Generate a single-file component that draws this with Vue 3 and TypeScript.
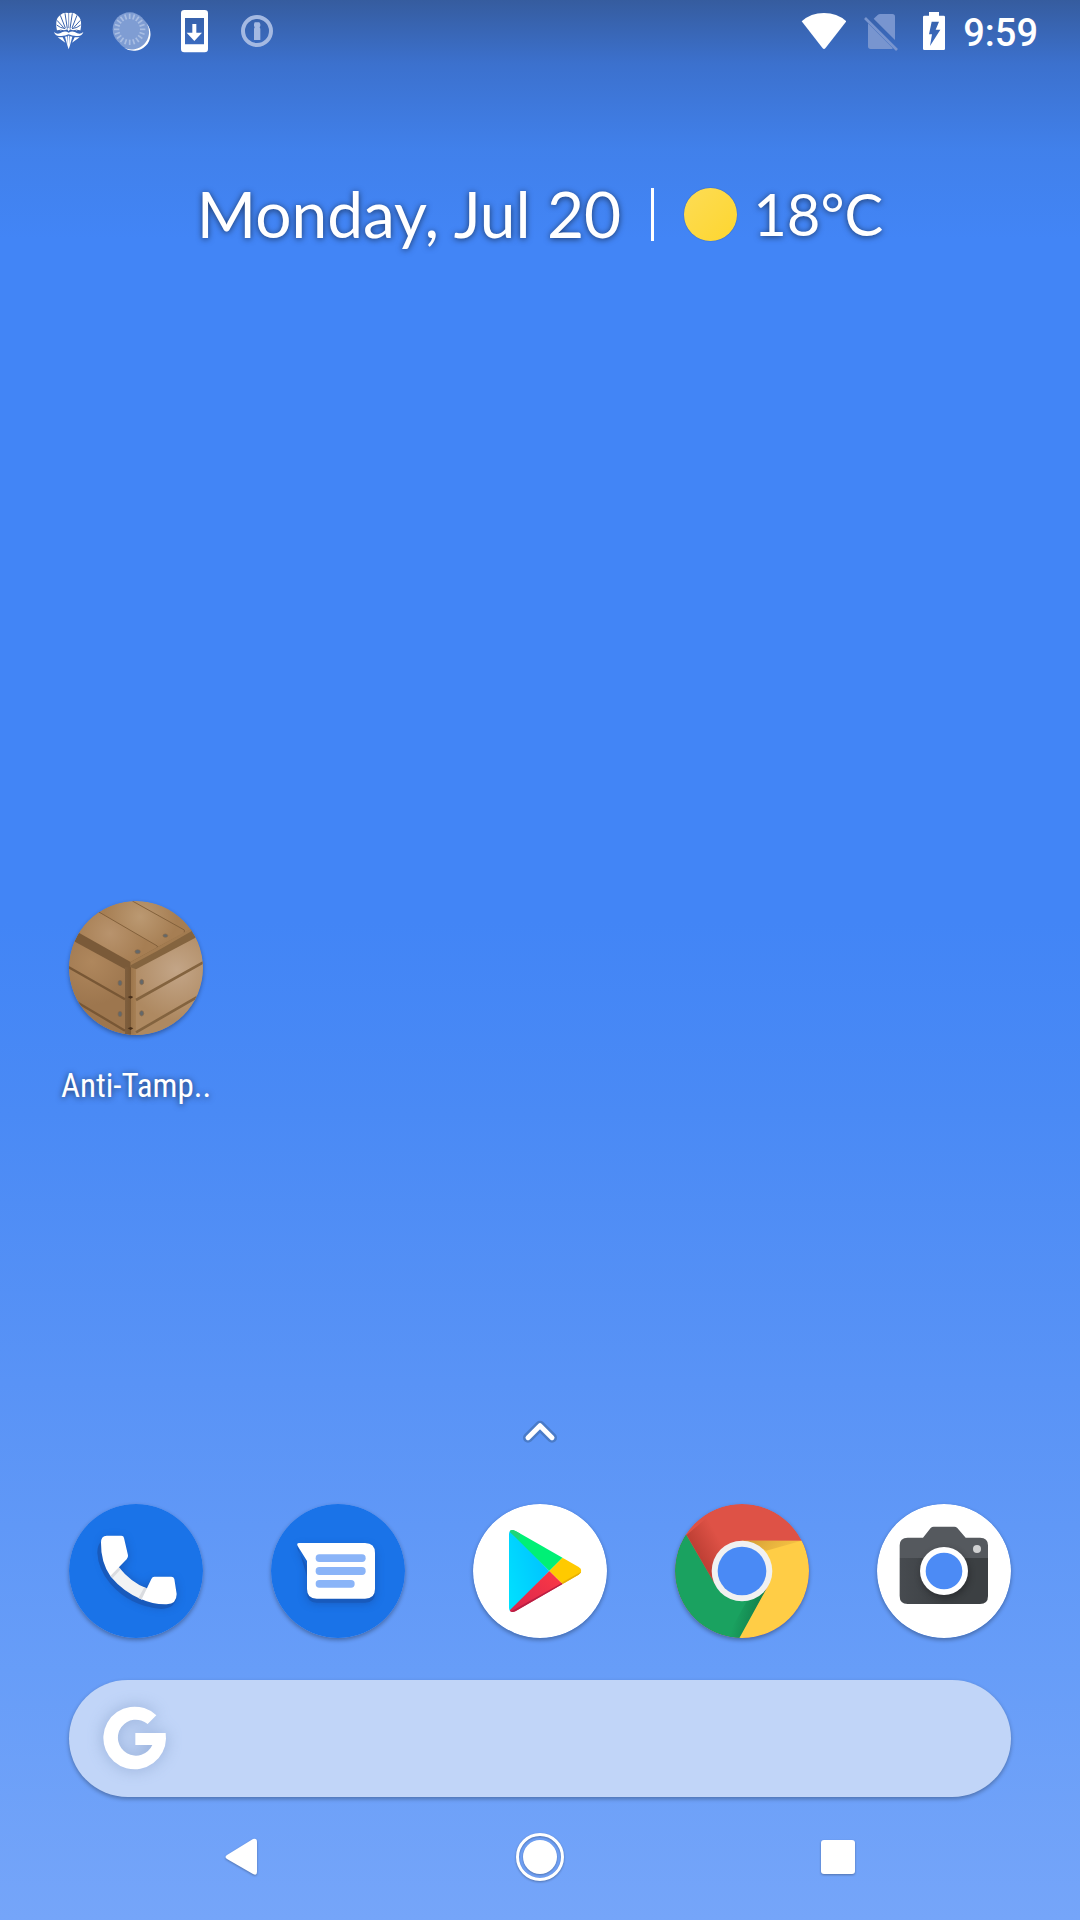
<script setup lang="ts">
const dateText = 'Monday, Jul 20'
const temperature = '18°C'
const clock = '9:59'

const ringTicks: number[] = Array.from({ length: 20 }, (_, i) => i * 18)
</script>

<template>
  <div class="home">
    <header class="status">
      <div class="status-group">
        <svg class="status-icon" viewBox="15 21 144 144" role="img" aria-label="Root manager">
          <path
            fill="#fff"
            d="M85 39Q69 37 61 45Q50 53 49 66Q47 80 51 92L68 93L82 88L86 94L90 88L104 93L121 92Q125 80 123 66Q122 53 111 45Q103 37 87 39Z"
          />
          <g fill="none" stroke="#3962ad" stroke-width="3">
            <path d="M82 86L75 40M90 86L97 40M76 84L61 46M96 84L111 46M71 83L51 61M101 83L121 61" />
            <path d="M50 75Q60 84 76 86M122 75Q112 84 96 86M50 93Q62 88 75 93M122 93Q110 88 97 93" />
            <path d="M86 36V84" stroke-width="2" />
          </g>
          <path
            fill="#fff"
            d="M42 96Q50 104 60 100Q74 90 86 98Q98 90 112 100Q122 104 130 96Q126 109 112 108Q98 109 86 103Q74 109 60 108Q46 109 42 96ZM53 112L68 112L76 128ZM119 112L104 112L96 128ZM75 110L82 109L82 136ZM97 110L90 109L90 136ZM84 107H88L90 136L86 148L82 136Z"
          />
        </svg>
        <svg class="status-icon" viewBox="204 21 144 144" role="img" aria-label="Syncing">
          <circle cx="279" cy="99" r="51" fill="#7f9dd3" />
          <path d="M321 72A52 52 0 0 1 252 143A50 50 0 0 0 321 72Z" fill="#fff" />
          <circle cx="269" cy="88" r="51" fill="#7f9dd3" />
          <g stroke="#a9bee3" stroke-width="5">
            <line v-for="a in ringTicks" :key="a" x1="269" y1="41" x2="269" y2="57" :transform="`rotate(${a} 269 88)`" />
          </g>
        </svg>
        <svg class="status-icon" viewBox="393 21 144 144" role="img" aria-label="System update">
          <path
            fill="#fff"
            fill-rule="evenodd"
            d="M433 30H494Q504 30 504 40V147Q504 157 494 157H433Q423 157 423 147V40Q423 30 433 30ZM435 54V133H492V54Z"
          />
          <path fill="#fff" d="M457 72H469V98H486L463 123L440 98H457Z" />
        </svg>
        <svg class="status-icon" viewBox="582 21 144 144" role="img" aria-label="Password manager">
          <circle cx="651" cy="93" r="42" fill="none" stroke="#a4b9e2" stroke-width="12" />
          <path fill="#a4b9e2" d="M644 67H658L661 72V78L659 82L661 86V120H642V86L644 82L642 78V72Z" />
        </svg>
      </div>
      <div class="status-group right">
        <svg class="status-icon" viewBox="54 21 144 144" role="img" aria-label="Wi-Fi">
          <path fill="#fff" d="M65 64Q92 39 132 39Q172 39 199 64L136 145Q132 149 128 145Z" />
        </svg>
        <svg class="status-icon" viewBox="222 21 144 144" role="img" aria-label="No SIM">
          <path
            fill="#7895cf"
            d="M281 56L293 45Q296 42 301 42H337Q345 42 345 50V120ZM264 70L338 144L337 147H272Q264 147 264 139Z"
          />
          <path d="M255 54L351 150" stroke="#7895cf" stroke-width="8" />
        </svg>
        <svg class="status-icon" viewBox="390 21 144 144" role="img" aria-label="Battery charging">
          <path
            fill="#fff"
            fill-rule="evenodd"
            d="M447 36H477V47H491Q495 47 495 51V146Q495 150 491 150H433Q429 150 429 146V51Q429 47 433 47H447ZM455 65L447 103H456L450 138L481 89H467L477 65Z"
          />
        </svg>
        <time class="clock">{{ clock }}</time>
      </div>
    </header>

    <main class="workspace">
      <section class="glance">
        <a class="glance-text" href="#">{{ dateText }}</a>
        <span class="divider"></span>
        <a class="weather" href="#">
          <span class="sun"></span>
          <span class="glance-text temperature">{{ temperature }}</span>
        </a>
      </section>

      <section class="apps">
        <a class="app" href="#">
          <svg class="icon" viewBox="57 63 402 402" aria-hidden="true">
            <defs>
              <radialGradient id="woodLeft" gradientUnits="userSpaceOnUse" cx="125" cy="245" r="130">
                <stop offset="0" stop-color="#af875d" />
                <stop offset="1" stop-color="#9d764e" />
              </radialGradient>
              <radialGradient id="woodRight" gradientUnits="userSpaceOnUse" cx="380" cy="270" r="150">
                <stop offset="0" stop-color="#c3a587" />
                <stop offset="1" stop-color="#ae8961" />
              </radialGradient>
              <radialGradient id="woodTop" gradientUnits="userSpaceOnUse" cx="180" cy="160" r="110">
                <stop offset="0" stop-color="#b8936d" />
                <stop offset="1" stop-color="#a67e53" />
              </radialGradient>
              <radialGradient id="woodBack" gradientUnits="userSpaceOnUse" cx="270" cy="110" r="110">
                <stop offset="0" stop-color="#bb9972" />
                <stop offset="1" stop-color="#a67e53" />
              </radialGradient>
              <linearGradient id="post" x1="0" x2="1">
                <stop offset="0" stop-color="#7f5f3e" />
                <stop offset="0.5" stop-color="#795836" />
                <stop offset="0.56" stop-color="#9c764c" />
                <stop offset="1" stop-color="#a78055" />
              </linearGradient>
              <clipPath id="disc"><circle cx="258" cy="264" r="201" /></clipPath>
            </defs>
            <g clip-path="url(#disc)">
              <rect x="57" y="63" width="402" height="402" fill="url(#woodBack)" />
              <path d="M50 40L145 95L322 198V215L242 250L50 150Z" fill="url(#woodTop)" />
              <path d="M145 95L322 198V215M247 63L403 150V168" fill="none" stroke="#83613c" stroke-width="3" />
              <path d="M50 165L242 265V470H50Z" fill="url(#woodLeft)" />
              <path d="M242 265L465 150V470H242Z" fill="url(#woodRight)" />
              <path d="M50 138L242 246V272L226 268L50 172Z" fill="#7a5a39" />
              <path d="M242 246L322 202L465 126V158L258 268L242 275Z" fill="#84643f" />
              <path d="M242 246L322 202L403 157L440 138L440 145L320 214L242 256Z" fill="#a27b50" />
              <path d="M225 262L242 262L258 268V470H225Z" fill="url(#post)" />
              <path d="M50 258L225 358M80 366L225 452" stroke="#785735" stroke-width="7" />
              <path d="M258 360L465 244M258 457L450 346" stroke="#83633f" stroke-width="8" />
              <g fill="#64686a" stroke="#866a4b" stroke-width="2">
                <ellipse cx="263" cy="215" rx="8" ry="6" />
                <ellipse cx="346" cy="167" rx="7" ry="5" />
                <ellipse cx="210" cy="309" rx="6" ry="8" />
                <ellipse cx="210" cy="402" rx="6" ry="8" />
                <ellipse cx="275" cy="306" rx="6" ry="8" />
                <ellipse cx="275" cy="400" rx="6" ry="8" />
              </g>
              <path d="M233 351L242 347L250 351L242 356ZM233 445L242 441L250 445L242 450Z" fill="#49301b" />
            </g>
          </svg>
          <span class="app-label">Anti-Tamp..</span>
        </a>
      </section>

      <button class="drawer" type="button" aria-label="All apps">
        <svg class="chevron" viewBox="186 54 108 78" aria-hidden="true">
          <path d="M204 113L240 77L276 113" class="chevron-edge" />
          <path d="M204 113L240 77L276 113" class="chevron-line" />
        </svg>
      </button>

      <nav class="dock" aria-label="Favourites">
        <a class="app" href="#" aria-label="Phone">
          <svg class="icon" viewBox="57 42 402 402" aria-hidden="true">
            <circle cx="258" cy="243" r="201" fill="#1a73e8" />
            <path
              class="soft"
              d="M166 146H221L234 205L212 238Q242 278 290 294L308 270H372L380 322Q372 350 335 350Q265 348 207 294Q160 245 156 170Z"
            />
            <path
              fill="#185abc"
              d="M153 155Q142 165 142 188Q144 235 180 280Q240 350 335 357Q378 354 380 318L330 342L180 258Z"
            />
            <path fill="#f1f3f4" d="M208 233Q242 276 290 295L276 329Q222 308 181 259Z" />
            <path fill="#dadce0" d="M204 229L212 238L188 264L180 256ZM283 292L292 296L276 329L265 324Z" />
            <path fill="#fff" d="M170 137H214Q221 137 222 144L234 196Q235 203 230 208L181 258Q152 215 153 158Q153 137 170 137Z" />
            <path fill="#fff" d="M313 260H364Q371 260 373 267L380 312Q380 342 350 343Q308 344 275 328L304 267Q307 260 313 260Z" />
          </svg>
        </a>
        <a class="app" href="#" aria-label="Messages">
          <svg class="icon" viewBox="63 42 402 402" aria-hidden="true">
            <circle cx="264" cy="243" r="201" fill="#1a73e8" />
            <path class="soft" d="M146 172H345Q374 172 374 202V308Q374 338 345 338H200Q171 338 171 308V225Z" />
            <path fill="#185abc" d="M142 162V176L171 228V309Q171 338 200 338H345Q375 338 375 309V290H180Z" />
            <path fill="#fff" d="M147 159H345Q375 159 375 189V297Q375 326 345 326H200Q171 326 171 297V213L143 168Q139 159 147 159Z" />
            <g fill="#8ab4f8">
              <rect x="197" y="193" width="150" height="23" rx="11" />
              <rect x="197" y="231" width="150" height="24" rx="11" />
              <rect x="197" y="270" width="117" height="23" rx="11" />
            </g>
          </svg>
        </a>
        <a class="app" href="#" aria-label="Play Store">
          <svg class="icon" viewBox="39 312 402 402" aria-hidden="true">
            <defs>
              <linearGradient id="playBlue" x1="1" y1="0.2" x2="0" y2="0.8">
                <stop offset="0" stop-color="#00bfff" />
                <stop offset="1" stop-color="#00e1ff" />
              </linearGradient>
              <linearGradient id="playRed" x1="1" y1="0" x2="0" y2="1">
                <stop offset="0" stop-color="#ff3a44" />
                <stop offset="1" stop-color="#d5244f" />
              </linearGradient>
              <clipPath id="playShape">
                <path d="M147 402Q148 386 166 392L356 501Q372 512 356 524L166 634Q148 640 147 624Z" />
              </clipPath>
            </defs>
            <circle cx="240" cy="513" r="201" fill="#fff" />
            <g clip-path="url(#playShape)">
              <path d="M140 380L268 513L140 646Z" fill="url(#playBlue)" />
              <path d="M147 383L320 461L268 513L150 396Z" fill="#00f076" />
              <path d="M147 383L180 400L178 421L150 396Z" fill="#20d47a" />
              <path d="M307 474L380 480V540L307 551L268 513Z" fill="#ffca00" />
              <path d="M150 630L268 513L320 564L147 650Z" fill="url(#playRed)" />
              <path d="M150 636L307 548V556L160 640Z" fill="#b81f43" />
              <path d="M307 547L366 514V520L307 556Z" fill="#e6ae05" />
            </g>
          </svg>
        </a>
        <a class="app" href="#" aria-label="Chrome">
          <svg class="icon" viewBox="45 42 402 402" aria-hidden="true">
            <defs>
              <linearGradient id="redShade" gradientUnits="userSpaceOnUse" x1="115" y1="200" x2="185" y2="160">
                <stop offset="0" stop-color="#a83228" stop-opacity="0.6" />
                <stop offset="1" stop-color="#a83228" stop-opacity="0" />
              </linearGradient>
              <linearGradient id="yellowShade" x1="0" y1="0" x2="1" y2="0.2">
                <stop offset="0" stop-color="#c99232" stop-opacity="0.9" />
                <stop offset="1" stop-color="#e0aa3c" stop-opacity="0.3" />
              </linearGradient>
              <linearGradient id="greenShade" x1="1" y1="0.4" x2="0.3" y2="0.2">
                <stop offset="0" stop-color="#0f7344" stop-opacity="0.9" />
                <stop offset="1" stop-color="#0f7344" stop-opacity="0" />
              </linearGradient>
              <clipPath id="chromeDisc"><circle cx="246" cy="243" r="201" /></clipPath>
            </defs>
            <g clip-path="url(#chromeDisc)">
              <rect x="45" y="42" width="402" height="402" fill="#de5246" />
              <path d="M80 135L158 270L190 170L220 140L150 75Z" fill="url(#redShade)" />
              <path d="M30 60L79 135L168 288L246 333L318 300L237 450H30Z" fill="#1aa260" />
              <path d="M318 300L237 445L200 440L262 331Z" fill="url(#greenShade)" />
              <path d="M246 152H460V450H235L323 290Z" fill="#ffcd46" />
              <path d="M246 152H425L319 182Z" fill="url(#yellowShade)" />
            </g>
            <circle cx="246" cy="243" r="91" fill="#f1f1f1" />
            <circle cx="246" cy="243" r="73" fill="#4a8af5" />
          </svg>
        </a>
        <a class="app" href="#" aria-label="Camera">
          <svg class="icon" viewBox="51 42 402 402" aria-hidden="true">
            <defs>
              <linearGradient id="cameraBody" x1="0" x2="1">
                <stop offset="0" stop-color="#474b50" />
                <stop offset="0.5" stop-color="#3c4043" />
                <stop offset="1" stop-color="#3c4043" />
              </linearGradient>
            </defs>
            <circle cx="252" cy="243" r="201" fill="#fff" />
            <path d="M119 204H384V318Q384 342 360 342H143Q119 342 119 318Z" fill="url(#cameraBody)" />
            <path
              d="M119 204V166Q119 143 143 143H189L212 114Q216 110 221 110H283Q288 110 292 114L317 143H360Q384 143 384 166V204Z"
              fill="#55595e"
            />
            <circle class="lens-shadow" cx="256" cy="252" r="72" />
            <circle cx="252" cy="243" r="72" fill="#fff" />
            <circle cx="252" cy="243" r="55" fill="#4c8bf5" />
            <circle cx="351" cy="177" r="12" fill="#d0d1d2" />
          </svg>
        </a>
      </nav>

      <button class="search" type="button" aria-label="Google search">
        <svg class="google" viewBox="135 105 240 252" aria-hidden="true">
          <path
            fill="#fff"
            d="M319 163A94 94 0 1 0 348 233L347 216H256V252H307A54 54 0 1 1 293 189Z"
          />
        </svg>
      </button>
    </main>

    <nav class="system-nav" aria-label="System">
      <button type="button" aria-label="Back">
        <svg viewBox="0 0 48 48"><path d="M9 22L35 6Q39 5 39 9V39Q39 43 35 41L9 26Q6 24 9 22Z" /></svg>
      </button>
      <button type="button" aria-label="Home">
        <svg viewBox="0 0 48 48">
          <circle cx="24" cy="24" r="17" />
          <circle cx="24" cy="24" r="22.5" class="home-ring" />
        </svg>
      </button>
      <button type="button" aria-label="Recents">
        <svg viewBox="0 0 48 48"><rect x="7" y="7" width="34" height="34" rx="3" /></svg>
      </button>
    </nav>
  </div>
</template>

<style>
body {
  margin: 0;
}
</style>

<style scoped>
.home {
  display: flex;
  flex-direction: column;
  min-height: 100vh;
  color: #fff;
  font-family: Roboto, sans-serif;
  background:
    linear-gradient(rgba(44, 60, 90, 0.56) 0, rgba(50, 80, 140, 0.38) 64px, rgba(60, 110, 190, 0.2) 150px, rgba(66, 133, 246, 0) 240px),
    linear-gradient(#4285f6 0%, #4285f6 48%, #4a8af5 58%, #5993f6 72%, #679df8 87%, #75a5f9 100%);
}

a {
  color: inherit;
  text-decoration: none;
}

button {
  padding: 0;
  border: 0;
  background: none;
  cursor: pointer;
}

svg {
  display: block;
}

.status {
  display: flex;
  justify-content: space-between;
  height: 62px;
  padding: 0 42px 0 45px;
}

.status-group {
  display: flex;
  align-items: center;
  gap: 15px;
}

.status-group.right {
  gap: 8px;
}

.status-icon {
  width: 48px;
  height: 48px;
}

.clock {
  margin-left: -3px;
  padding-top: 4px;
  font-size: 38px;
  font-weight: 500;
  line-height: 48px;
}

.workspace {
  display: flex;
  flex: 1;
  flex-direction: column;
}

.glance {
  display: flex;
  align-items: center;
  justify-content: center;
  margin-top: 112px;
}

.glance-text {
  font-family: Lato, sans-serif;
  font-size: 64px;
  line-height: 80px;
  white-space: nowrap;
  text-shadow: 0 1px 6px rgba(0, 0, 0, 0.6);
}

.temperature {
  font-size: 58px;
}

.divider {
  width: 3px;
  height: 53px;
  margin: 0 30px;
  background: #fff;
}

.weather {
  display: flex;
  align-items: center;
  gap: 16px;
}

.sun {
  width: 53px;
  height: 53px;
  border-radius: 50%;
  background: linear-gradient(135deg, #fddc55, #fdd62f);
  box-shadow: 0 0 1px rgba(0, 0, 0, 0.5);
}

.apps,
.dock {
  display: grid;
  grid-template-columns: repeat(5, 1fr);
  padding: 0 35px;
}

.apps {
  margin-top: 647px;
}

.app {
  display: flex;
  flex-direction: column;
  align-items: center;
}

.icon {
  width: 134px;
  height: 134px;
  border-radius: 50%;
  box-shadow: 0 2px 4px rgba(0, 0, 0, 0.32);
}

.soft {
  fill: #17408b;
  opacity: 0.5;
  filter: blur(14px);
}

.lens-shadow {
  fill: #202124;
  opacity: 0.6;
  filter: blur(10px);
}

.app-label {
  margin-top: 29px;
  font-family: "Roboto Condensed", "Liberation Sans Narrow", Roboto, sans-serif;
  font-size: 33px;
  line-height: 44px;
  white-space: nowrap;
  text-shadow: 0 1px 6px rgba(0, 0, 0, 0.6);
}

.drawer {
  align-self: center;
  margin-top: auto;
}

.chevron {
  width: 36px;
  height: 26px;
}

.chevron path {
  fill: none;
  stroke-linecap: round;
  stroke-linejoin: round;
}

.chevron .chevron-edge {
  stroke: #4a7bc8;
  stroke-width: 30px;
}

.chevron .chevron-line {
  stroke: #fff;
  stroke-width: 15px;
}

.dock {
  margin-top: 60px;
}

.search {
  display: flex;
  align-items: center;
  height: 117px;
  margin: 42px 69px 0;
  padding: 0 26px 2px;
  border-radius: 59px;
  background: #c1d5f8;
  box-shadow: 0 2px 4px rgba(0, 0, 0, 0.3);
}

.google {
  width: 80px;
  height: 84px;
  filter: drop-shadow(0 0 8px rgba(90, 120, 170, 0.4));
}

.system-nav {
  display: grid;
  grid-template-columns: repeat(3, 1fr);
  height: 119px;
  padding: 0 93px 4px;
}

.system-nav button {
  display: flex;
  align-items: center;
  justify-content: center;
}

.system-nav svg {
  width: 48px;
  height: 48px;
  overflow: visible;
  fill: #fff;
  filter: drop-shadow(0 1px 1px rgba(0, 0, 0, 0.3));
}

.system-nav .home-ring {
  fill: none;
  stroke: #fff;
  stroke-width: 3px;
}
</style>
